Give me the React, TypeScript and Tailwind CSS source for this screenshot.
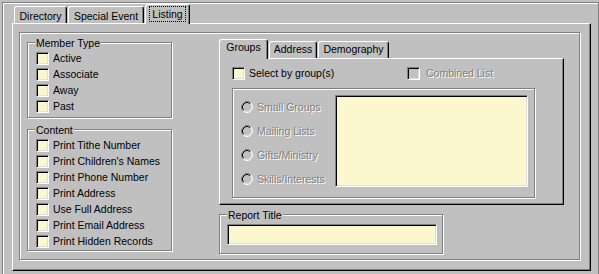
import React from "react";

function Check({ disabled = false }: { disabled?: boolean }) {
  return (
    <span
      className={`block h-[13px] w-[13px] shrink-0 border border-t-[#808080] border-l-[#808080] border-b-white border-r-white shadow-[inset_1px_1px_0_#000,inset_-1px_-1px_0_#dfdfdf] ${
        disabled ? "bg-[#c0c0c0]" : "bg-[#fbf8cf]"
      }`}
    />
  );
}

function Radio() {
  return (
    <svg width="12" height="12" viewBox="0 0 12 12" className="block shrink-0">
      <circle cx="6" cy="6" r="4" fill="#c0c0c0" />
      <path d="M2.11 9.89 A5.5 5.5 0 0 1 9.89 2.11" fill="none" stroke="#808080" />
      <path d="M9.89 2.11 A5.5 5.5 0 0 1 2.11 9.89" fill="none" stroke="#fff" />
      <path d="M2.82 9.18 A4.5 4.5 0 0 1 9.18 2.82" fill="none" stroke="#000" />
      <path d="M9.18 2.82 A4.5 4.5 0 0 1 2.82 9.18" fill="none" stroke="#dfdfdf" />
    </svg>
  );
}

function CheckRow({ label }: { label: string }) {
  return (
    <div className="flex h-[13px] items-center gap-[4px]">
      <Check />
      <span className="whitespace-nowrap leading-[13px]">{label}</span>
    </div>
  );
}

function GroupBox({
  label,
  className,
  children,
}: {
  label?: string;
  className: string;
  children?: React.ReactNode;
}) {
  return (
    <div
      className={`relative border border-[#808080] shadow-[1px_1px_0_#fff,inset_1px_1px_0_#fff] ${className}`}
    >
      {label && (
        <span className="absolute -top-[6px] left-[7px] bg-[#c0c0c0] px-[1px] leading-[13px] whitespace-nowrap">
          {label}
        </span>
      )}
      {children}
    </div>
  );
}

export default function App() {
  const memberTypes = ["Active", "Associate", "Away", "Past"];
  const content = [
    "Print Tithe Number",
    "Print Children's Names",
    "Print Phone Number",
    "Print Address",
    "Use Full Address",
    "Print Email Address",
    "Print Hidden Records",
  ];
  const groups = ["Small Groups", "Mailing Lists", "Gifts/Ministry", "Skills/Interests"];

  return (
    <div className="h-[274px] w-[599px] overflow-hidden bg-[#c0c0c0] font-['Liberation_Sans',Arial,sans-serif] text-[10.5px] text-black">
      <div className="ml-[2px] mt-[2px] h-[290px] w-[597px] border border-[#808080] shadow-[inset_1px_1px_0_#fff]">
        <div className="ml-[9px] mt-[1px]">
          {/* outer tabs */}
          <div className="flex items-end">
            <div className="ml-[2px] h-[17px] w-[53px] rounded-t-[3px] border-l border-t border-r border-white border-r-black pt-[3px] text-center leading-[13px] shadow-[inset_-1px_0_0_#808080]">
              Directory
            </div>
            <div className="ml-[1px] h-[17px] w-[76px] rounded-t-[3px] border-l border-t border-r border-white border-r-black pt-[3px] text-center leading-[13px] shadow-[inset_-1px_0_0_#808080]">
              Special Event
            </div>
            <div className="relative z-10 -mb-px ml-[1px] flex h-[20px] w-[45px] justify-center rounded-t-[3px] border-l border-t border-r border-white border-r-black bg-[#c0c0c0] pt-[1px] shadow-[inset_-1px_0_0_#808080]">
              <span className="h-[16px] border border-dotted border-black px-[2px] leading-[14px]">
                Listing
              </span>
            </div>
          </div>

          {/* outer panel */}
          <div className="h-[248px] w-[579px] border-l border-t border-r border-b border-white border-r-black border-b-black shadow-[inset_-1px_-1px_0_#808080]">
            <div className="ml-[6px] mt-[8px] flex h-[228px] w-[561px] border border-[#808080] shadow-[1px_1px_0_#fff,inset_1px_1px_0_#fff]">
              {/* left column */}
              <div className="ml-[7px] mt-[9px] flex flex-col">
                <GroupBox label="Member Type" className="flex h-[76px] w-[145px] flex-col gap-[3px] pl-[8px] pt-[9px]">
                  {memberTypes.map((m) => (
                    <CheckRow key={m} label={m} />
                  ))}
                </GroupBox>
                <GroupBox label="Content" className="mt-[11px] flex h-[122px] w-[145px] flex-col gap-[3px] pl-[8px] pt-[9px]">
                  {content.map((c) => (
                    <CheckRow key={c} label={c} />
                  ))}
                </GroupBox>
              </div>

              {/* right column */}
              <div className="ml-[47px] mt-[6px] flex flex-col">
                <div className="flex items-end">
                  <div className="relative z-10 -mb-px h-[20px] w-[49px] rounded-t-[3px] border-l border-t border-r border-white border-r-black bg-[#c0c0c0] pt-[1px] text-center leading-[13px] shadow-[inset_-1px_0_0_#808080]">
                    Groups
                  </div>
                  <div className="ml-[1px] h-[17px] w-[48px] rounded-t-[3px] border-l border-t border-r border-white border-r-black pt-[1px] text-center leading-[13px] shadow-[inset_-1px_0_0_#808080]">
                    Address
                  </div>
                  <div className="ml-[1px] h-[17px] w-[71px] rounded-t-[3px] border-l border-t border-r border-white border-r-black pt-[1px] text-center leading-[13px] shadow-[inset_-1px_0_0_#808080]">
                    Demography
                  </div>
                </div>

                <div className="h-[147px] w-[345px] border-l border-t border-r border-b border-white border-r-black border-b-black shadow-[inset_-1px_-1px_0_#808080]">
                  <div className="ml-[12px] mt-[8px] flex">
                    <div className="flex h-[13px] w-[175px] items-center gap-[4px]">
                      <Check />
                      <span className="leading-[13px]">Select by group(s)</span>
                    </div>
                    <div className="flex h-[13px] items-center gap-[6px]">
                      <Check disabled />
                      <span className="leading-[13px] text-[#808080] [text-shadow:1px_1px_0_#fff]">
                        Combined List
                      </span>
                    </div>
                  </div>

                  <div className="ml-[12px] mt-[8px] flex h-[110px] w-[303px] border border-[#808080] pl-[8px] pt-[6px] shadow-[1px_1px_0_#fff,inset_1px_1px_0_#fff]">
                    <div className="flex w-[94px] flex-col">
                      {groups.map((g) => (
                        <div key={g} className="flex h-[24px] items-center gap-[4px]">
                          <Radio />
                          <span className="whitespace-nowrap leading-[13px] text-[#808080] [text-shadow:1px_1px_0_#fff]">
                            {g}
                          </span>
                        </div>
                      ))}
                    </div>
                    <div className="h-[92px] w-[193px] border border-t-[#808080] border-l-[#808080] border-b-white border-r-white bg-[#fbf8cf] shadow-[inset_1px_1px_0_#000,inset_-1px_-1px_0_#dfdfdf]" />
                  </div>
                </div>

                <GroupBox label="Report Title" className="mt-[9px] h-[40px] w-[224px] pl-[7px] pt-[9px]">
                  <div className="h-[21px] w-[210px] border border-t-[#808080] border-l-[#808080] border-b-white border-r-white bg-[#fbf8cf] shadow-[inset_1px_1px_0_#000,inset_-1px_-1px_0_#dfdfdf]" />
                </GroupBox>
              </div>
            </div>
          </div>
        </div>
      </div>
    </div>
  );
}
